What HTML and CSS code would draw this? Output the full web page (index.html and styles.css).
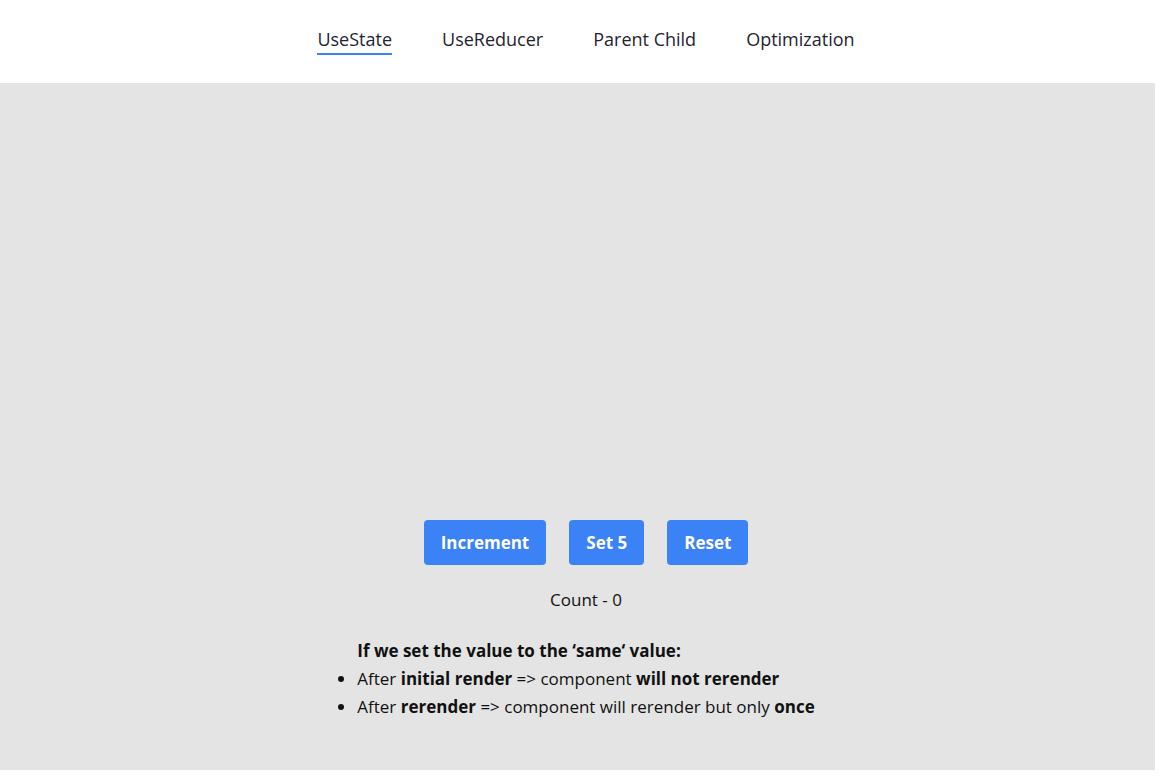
FILE: index.html
```html
<!DOCTYPE html>
<html>
<head>
<meta charset="utf-8">
<link rel="stylesheet" href="styles.css">
</head>
<body>
<header class="topbar">
  <nav class="tabs">
    <a class="tab active">UseState</a>
    <a class="tab">UseReducer</a>
    <a class="tab">Parent Child</a>
    <a class="tab">Optimization</a>
  </nav>
</header>
<main class="panel">
  <div class="buttons">
    <button class="btn">Increment</button>
    <button class="btn">Set 5</button>
    <button class="btn">Reset</button>
  </div>
  <p class="count">Count - 0</p>
  <div class="notes-wrap">
    <ul class="notes">
      <li class="heading"><b>If we set the value to the ‘same‘ value:</b></li>
      <li>After <b>initial render</b> =&gt; component <b>will not rerender</b></li>
      <li>After <b>rerender</b> =&gt; component will rerender but only <b>once</b></li>
    </ul>
  </div>
</main>
</body>
</html>
```

FILE: styles.css
```css
html, body {
  margin: 0;
  padding: 0;
  background: #ffffff;
}
body {
  font-family: "Open Sans", "Noto Sans", sans-serif;
  color: #111111;
  width: 1162px;
  height: 777px;
  overflow: hidden;
}
.topbar {
  height: 83px;
  width: 1155px;
  background: #ffffff;
  display: flex;
  justify-content: center;
  padding-left: 17px;
  box-sizing: border-box;
}
.tabs {
  display: flex;
  gap: 50px;
  align-items: flex-start;
  padding-top: 27px;
}
.tab {
  font-size: 18px;
  line-height: 25px;
  color: #1f2430;
  padding-bottom: 1px;
  border-bottom: 2px solid transparent;
  cursor: pointer;
}
.tab.active {
  border-bottom-color: #3b82f6;
}
.panel {
  width: 1155px;
  height: 687px;
  background: #e4e4e4;
  box-sizing: border-box;
  padding-top: 437px;
  padding-left: 17px;
  display: flex;
  flex-direction: column;
  align-items: center;
}
.buttons {
  display: flex;
  gap: 23px;
}
.btn {
  font-family: inherit;
  font-size: 17px;
  font-weight: 700;
  color: #ffffff;
  background: #3b82f6;
  border: none;
  border-radius: 4px;
  height: 45px;
  padding: 0 17px;
}
.count {
  margin: 22px 0 0;
  font-size: 17px;
  line-height: 26px;
}
.notes-wrap {
  margin-top: 24px;
}
.notes {
  margin: 0;
  padding: 0;
  font-size: 17px;
  line-height: 28px;
  text-align: left;
}
.notes li {
  list-style: disc outside;
}
.notes li.heading {
  list-style: none;
}
.notes b {
  font-weight: 700;
}
```
